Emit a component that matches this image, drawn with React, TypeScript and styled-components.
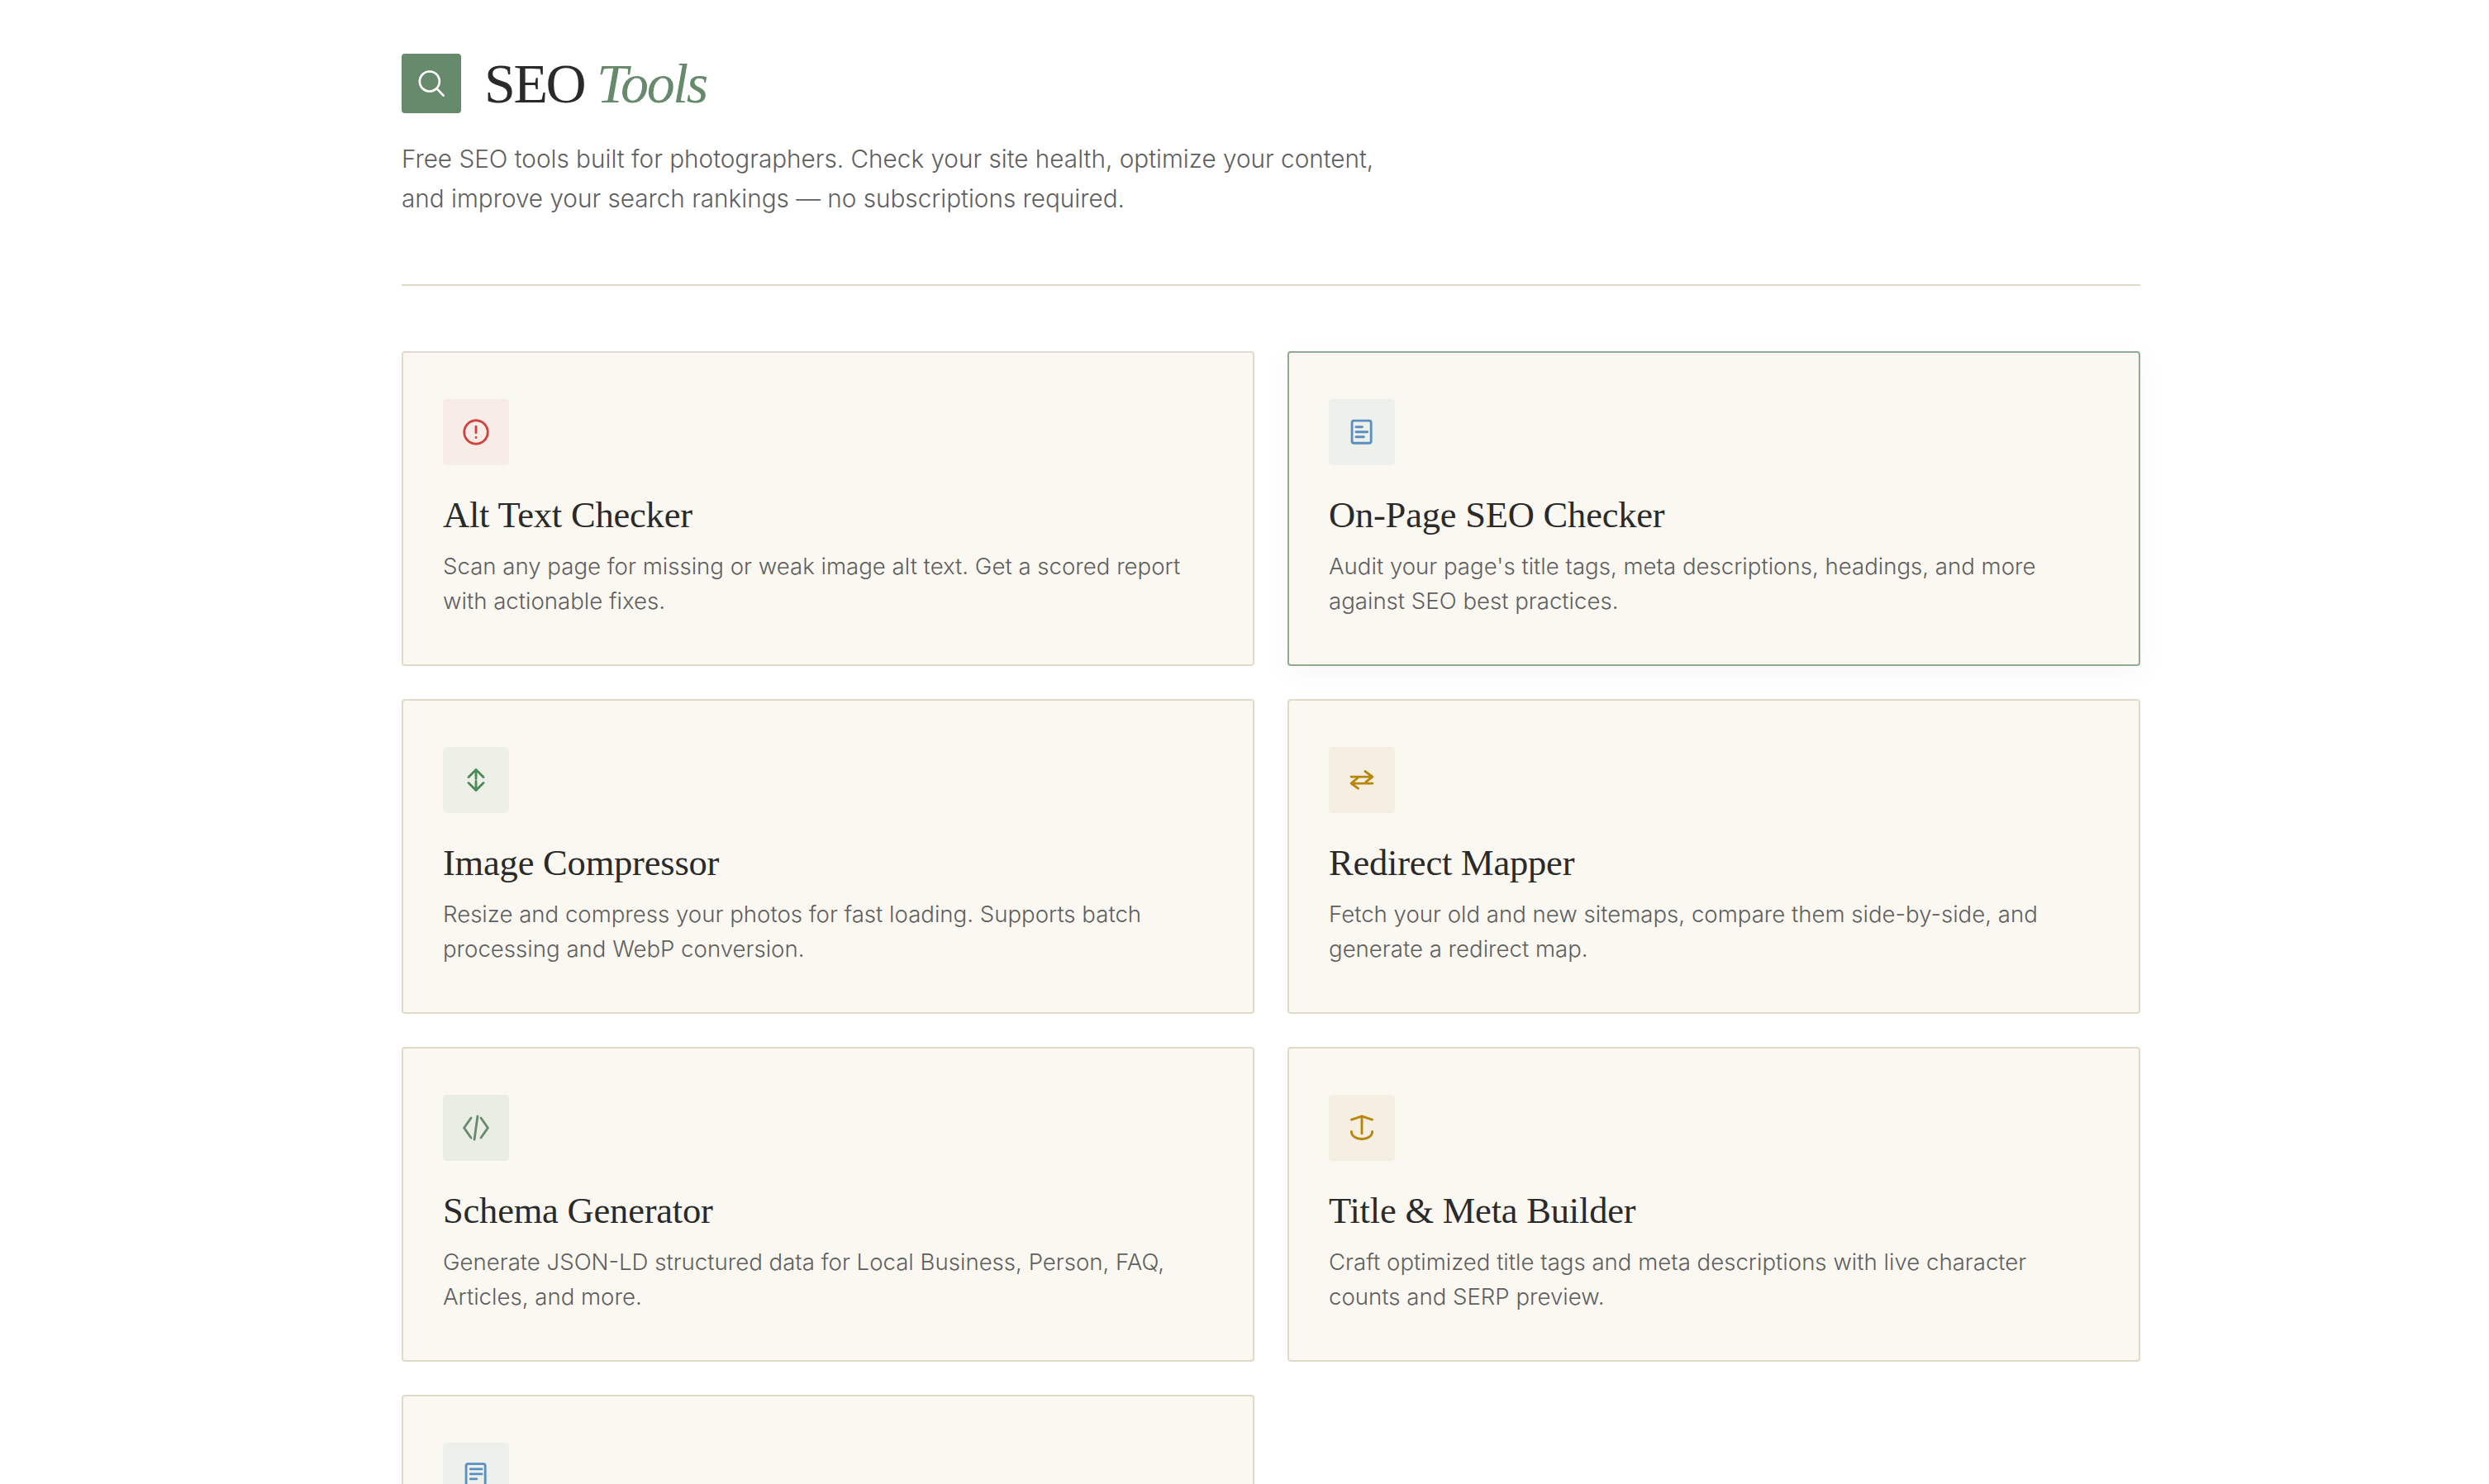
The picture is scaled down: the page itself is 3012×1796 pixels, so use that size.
import React from "react";
import styled, { createGlobalStyle } from "styled-components";

const Global = createGlobalStyle`
  html, body { margin: 0; padding: 0; background: #ffffff; }
  body { font-family: "Inter", "Liberation Sans", sans-serif; }
  * { box-sizing: border-box; }
`;
const Page = styled.main`
  padding: 65px 422px 80px 486px;
`;
const Header = styled.header`
  padding-bottom: 80px;
  border-bottom: 2px solid #e0dbc9;
  margin-bottom: 79px;
`;
const TitleRow = styled.div`
  display: flex;
  align-items: center;
  gap: 28px;
  margin-bottom: 31px;
`;
const LogoBox = styled.div`
  width: 72px;
  height: 72px;
  border-radius: 4px;
  background: #678a6d;
  color: #ffffff;
  display: flex;
  align-items: center;
  justify-content: center;
`;
const H1 = styled.h1`
  margin: 0;
  font-family: "Liberation Serif", serif;
  font-weight: 400;
  font-size: 68px;
  line-height: 72px;
  color: #2a2a2a;
  letter-spacing: -2.4px;
`;
const Accent = styled.em`
  color: #678a6d;
  font-style: italic;
`;
const Lead = styled.p`
  margin: 0;
  max-width: 1200px;
  font-weight: 300;
  font-size: 29.7px;
  line-height: 48px;
  color: #5f5f5f;
`;
const Grid = styled.section`
  display: grid;
  grid-template-columns: 1fr 1fr;
  gap: 40px;
`;
const Card = styled.article<{ $active?: boolean }>`
  background: #fbf8f1;
  border: 2px solid ${(p) => (p.$active ? "#8fab92" : "#e0dbc9")};
  border-radius: 4px;
  padding: 56px 48px;
  box-shadow: ${(p) => (p.$active ? "0 8px 32px rgba(60, 80, 60, 0.05)" : "none")};
`;
const IconBox = styled.div<{ $bg: string; $fg: string }>`
  width: 80px;
  height: 80px;
  border-radius: 4px;
  background: ${(p) => p.$bg};
  color: ${(p) => p.$fg};
  display: flex;
  align-items: center;
  justify-content: center;
  margin-bottom: 32px;
`;
const CardTitle = styled.h2`
  margin: 0 0 12px;
  font-family: "Liberation Serif", serif;
  font-weight: 400;
  font-size: 44.5px;
  line-height: 57px;
  letter-spacing: -0.2px;
  color: #2a2a2a;
`;
const CardText = styled.p`
  margin: 0;
  font-weight: 300;
  font-size: 27.6px;
  line-height: 42px;
  color: #5f5f5f;
`;
const Glyph = styled.svg.attrs({
  viewBox: "0 0 24 24",
  fill: "none",
  stroke: "currentColor",
  strokeLinecap: "round",
  strokeLinejoin: "round",
})`
  width: 36px;
  height: 36px;
  stroke-width: 1.9;
`;
const SearchGlyph = styled(Glyph)`
  width: 40px;
  height: 40px;
  stroke-width: 1.6;
`;

const Icons: Record<string, React.ReactNode> = {
  alert: (<><circle cx="12" cy="12" r="9.5" /><path d="M12 7.5V12.5M12 16.2V16.3" /></>),
  doc: (<><rect x="4.05" y="2.75" width="15.4" height="18.1" rx="1.5" /><path d="M7.3 7.8H12.3M7.3 11.8H16.5M7.3 15.8H13.6" /></>),
  arrows: (<path d="M6 9.6L12 3.6L18 9.6M12 3.6V11M12 13V20.4M6 14.4L12 20.4L18 14.4" />),
  swap: (<path d="M3.4 9.4H20.6M14.6 5L20.6 9.4L15.2 13.6M3.4 14.7H20.6M9 10L3.4 14.7L9 18.8" />),
  code: (<path d="M8 4L2.4 12L8 20M13.3 2.6L10.7 21.4M16 4L21.6 12L16 20" />),
  title: (<path d="M3.6 5.4L12 2.6L20.4 5.4M12 2.6V16.6M3.6 15C3.6 19 8 21 12 21C16 21 20.4 19 20.4 15" />),
  list: (<><rect x="4.05" y="2.4" width="15.4" height="19.2" rx="1.5" /><path d="M7.5 6.6H16.7M7.5 10.6H16.7M7.5 14.6H12.5" /></>),
};

const tools = [
  { icon: "alert", bg: "#f7ece6", fg: "#d0413f", title: "Alt Text Checker", text: "Scan any page for missing or weak image alt text. Get a scored report with actionable fixes." },
  { icon: "doc", bg: "#eef0ec", fg: "#5b8fc0", title: "On-Page SEO Checker", text: "Audit your page's title tags, meta descriptions, headings, and more against SEO best practices.", active: true },
  { icon: "arrows", bg: "#eef0e8", fg: "#4a8c5c", title: "Image Compressor", text: "Resize and compress your photos for fast loading. Supports batch processing and WebP conversion." },
  { icon: "swap", bg: "#f5efe2", fg: "#b8860b", title: "Redirect Mapper", text: "Fetch your old and new sitemaps, compare them side-by-side, and generate a redirect map." },
  { icon: "code", bg: "#eaede4", fg: "#678a6d", title: "Schema Generator", text: "Generate JSON-LD structured data for Local Business, Person, FAQ, Articles, and more." },
  { icon: "title", bg: "#f5efe2", fg: "#b8860b", title: "Title & Meta Builder", text: "Craft optimized title tags and meta descriptions with live character counts and SERP preview." },
  { icon: "list", bg: "#eef0ec", fg: "#5b8fc0", title: "Content Brief", text: "" },
];

export default function App() {
  return (
    <Page>
      <Global />
      <Header>
        <TitleRow>
          <LogoBox>
            <SearchGlyph>
              <circle cx="10.7" cy="10.5" r="7.2" />
              <path d="M16 15.8L20.8 20.8" />
            </SearchGlyph>
          </LogoBox>
          <H1>SEO <Accent>Tools</Accent></H1>
        </TitleRow>
        <Lead>
          Free SEO tools built for photographers. Check your site health, optimize your content, and improve your search rankings — no subscriptions required.
        </Lead>
      </Header>
      <Grid>
        {tools.map((t) => (
          <Card key={t.title} $active={t.active}>
            <IconBox $bg={t.bg} $fg={t.fg}>
              <Glyph>{Icons[t.icon]}</Glyph>
            </IconBox>
            <CardTitle>{t.title}</CardTitle>
            <CardText>{t.text}</CardText>
          </Card>
        ))}
      </Grid>
    </Page>
  );
}
